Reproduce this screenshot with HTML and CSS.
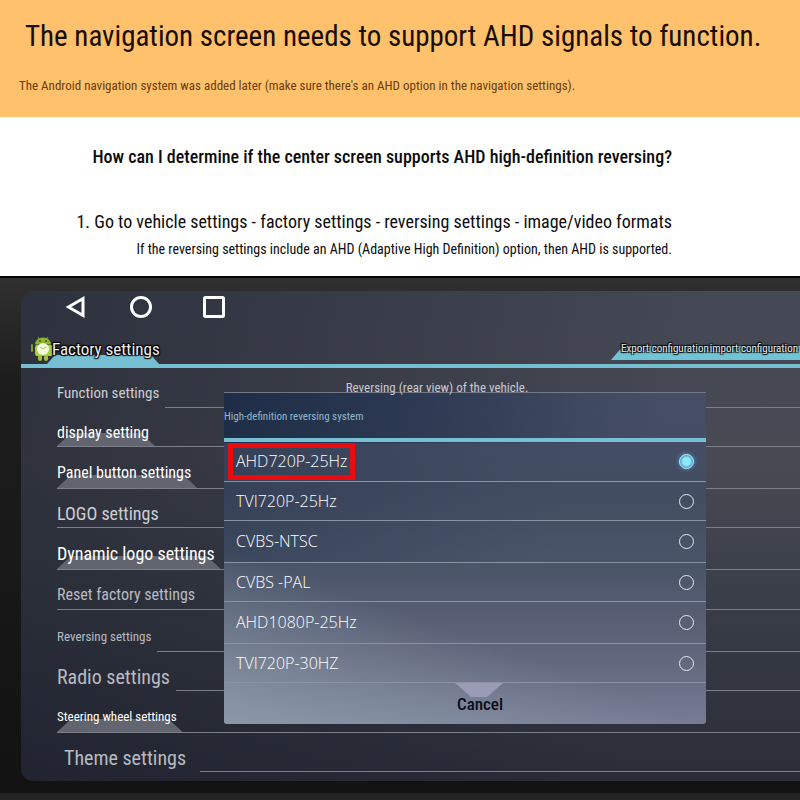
FILE: index.html
```
<!DOCTYPE html>
<html lang="en">
<head>
  <meta charset="UTF-8" />
  <title>AHD reversing settings</title>
  <link rel="stylesheet" href="styles.css">
</head>
<body>
  <header class="banner">
    <h1>The navigation screen needs to support AHD signals to function.</h1>
    <p>The Android navigation system was added later (make sure there's an AHD option in the navigation settings).</p>
  </header>

  <section class="guide">
    <h2>How can I determine if the center screen supports AHD high-definition reversing?</h2>
    <p class="step">1. Go to vehicle settings - factory settings - reversing settings - image/video formats</p>
    <p class="note">If the reversing settings include an AHD (Adaptive High Definition) option, then AHD is supported.</p>
  </section>

  <main class="device">
    <div class="screen">
      <nav class="navbar">
        <button type="button" aria-label="Back">
          <svg width="24" height="24" viewBox="0 0 24 24"><path d="M19 3.500V20.500L4.500 12Z" /></svg>
        </button>
        <button type="button" aria-label="Home">
          <svg width="24" height="24" viewBox="0 0 24 24"><circle cx="12" cy="12" r="9.500" /></svg>
        </button>
        <button type="button" class="recent" aria-label="Recent apps">
          <svg width="24" height="24" viewBox="0 0 24 24"><rect x="2.500" y="2.500" width="19" height="19" rx="1" /></svg>
        </button>
      </nav>

      <div class="titlebar">
        <svg class="robot" width="24" height="26" viewBox="0 0 24 26">
          <path d="M7 1l2 3M17 1l-2 3" stroke="#86a832" fill="none" />
          <path d="M4 8.500a8 7 0 0 1 16 0z" fill="#8eb52e" />
          <rect x="4" y="9" width="18" height="11" rx="2" fill="#a9cf3c" />
          <rect x="0" y="8" width="2" height="8" rx="1" fill="#7f9b34" />
          <rect x="7" y="19" width="4" height="6" rx="2" fill="#9fc23c" />
          <rect x="13" y="19" width="4" height="6" rx="2" fill="#9fc23c" />
          <circle cx="12" cy="13" r="6" fill="#f2fadd" />
          <path d="M9 11l3 2 3-2" stroke="#a5c552" fill="none" />
          <circle cx="9" cy="5" r="1" fill="#46601a" />
          <circle cx="15" cy="5" r="1" fill="#46601a" />
        </svg>
        <h3>Factory settings</h3>
        <div class="actions">
          <button type="button">Export configuration</button>
          <button type="button">import configuration</button>
        </div>
      </div>

      <ul class="menu">
        <li><a class="medium" href="#">Function settings</a></li>
        <li class="tab"><a class="large bright" href="#">display setting</a></li>
        <li class="tab"><a class="large bright" href="#">Panel button settings</a></li>
        <li class="line"><a class="xlarge" href="#">LOGO settings</a></li>
        <li class="tab"><a class="xlarge bright" href="#">Dynamic logo settings</a></li>
        <li class="line"><a class="large dim" href="#">Reset factory settings</a></li>
        <li><a class="small dim" href="#">Reversing settings</a></li>
        <li><a class="huge dim" href="#">Radio settings</a></li>
        <li class="tab"><a class="small bright" href="#">Steering wheel settings</a></li>
        <li><a class="huge dim inset" href="#">Theme settings</a></li>
      </ul>

      <form class="dialog">
        <h4 class="dialog-title">Reversing (rear view) of the vehicle.</h4>
        <p class="dialog-head">High-definition reversing system</p>
        <label class="option"><span class="marked">AHD720P-25Hz</span><input type="radio" name="format" checked></label>
        <label class="option"><span>TVI720P-25Hz</span><input type="radio" name="format"></label>
        <label class="option"><span>CVBS-NTSC</span><input type="radio" name="format"></label>
        <label class="option"><span>CVBS -PAL</span><input type="radio" name="format"></label>
        <label class="option"><span>AHD1080P-25Hz</span><input type="radio" name="format"></label>
        <label class="option"><span>TVI720P-30HZ</span><input type="radio" name="format"></label>
        <button type="button" class="cancel">Cancel</button>
      </form>
    </div>
  </main>
</body>
</html>
```
FILE: styles.css
```
* { box-sizing: border-box; }
body { margin: 0; background: #fff; color: #0c0c0c; font-family: "Roboto Condensed", Roboto, "Liberation Sans", sans-serif; }
h1, h2, h3, h4, p, ul { margin: 0; padding: 0; font-weight: normal; white-space: nowrap; }
button { margin: 0; padding: 0; border: 0; background: none; font-family: inherit; }

.banner { height: 117px; padding: 14px 19px; background: #ffc16b; }
.banner h1 { padding-left: 6px; font-size: 29px; line-height: 44px; color: #170d02; }
.banner p { margin-top: 18px; font-size: 13px; line-height: 20px; color: #6b3c0b; }

.guide { width: 84%; height: 159px; padding-top: 28px; text-align: right; }
.guide h2 { font-size: 18px; font-weight: 500; line-height: 24px; }
.guide .step { margin-top: 40px; font-size: 18px; line-height: 26px; }
.guide .note { margin-top: 4px; font-size: 14px; line-height: 20px; }

.device { padding: 13px 0 12px 21px; border-top: 2px solid #060606; border-bottom: 8px solid #242424; background: linear-gradient(#303030, #1d1d1d 20%, #121212); }
.screen { position: relative; padding-bottom: 9px; border-radius: 12px 0 0 12px; background: linear-gradient(100deg, rgba(22, 26, 38, 0.5), rgba(22, 26, 38, 0.3) 35%, transparent 80%), linear-gradient(#454955, #474953 35%, #3b3f49 60%, #2a2c38); }

.navbar { display: flex; gap: 41px; padding: 4px 0 0 43px; }
.navbar button { width: 24px; height: 24px; }
.navbar .recent { margin-left: 8px; }
.navbar svg { display: block; fill: none; stroke: #fff; stroke-width: 3; }

.titlebar { position: relative; display: flex; align-items: center; height: 49px; padding: 14px 2px 0 10px; border-bottom: 4px solid #76bed2; }
.titlebar::before { content: ""; position: absolute; left: 26px; bottom: 0; width: 112px; height: 9px; background: #76bed2; clip-path: polygon(8px 0, 104px 0, 100% 100%, 0 100%); }
.titlebar h3 { position: relative; margin-left: -3px; font-size: 17px; color: #eee; text-shadow: 1px 1px 1px #000, -1px -1px 1px #000, 1px -1px 1px #000, -1px 1px 1px #000; }
.robot { position: relative; }
.actions { position: relative; display: flex; gap: 1px; margin-left: auto; }
.actions::before { content: ""; position: absolute; right: -2px; left: -10px; bottom: -5px; height: 14px; background: #72c3d6; clip-path: polygon(12px 0, 100% 0, 100% 100%, 0 100%); }
.actions button { position: relative; font-size: 11px; color: #e4e4e4; text-shadow: 1px 1px 1px #000, -1px -1px 1px #000, 1px -1px 1px #000, -1px 1px 1px #000; }

.menu { list-style: none; padding-left: 36px; }
.menu li { display: flex; height: 42px; }
.menu li:first-child { height: 40px; }
.menu li:nth-child(even) { height: 39px; }
.menu li:nth-child(6) { height: 40px; }
.menu li::after { content: ""; flex: 1; border-bottom: 1px solid #7c7f88; }
.menu a { position: relative; display: flex; align-items: center; padding: 10px 6px 0 0; color: #ccced4; text-decoration: none; }
.menu .line a, .menu .tab a { border-bottom: 1px solid #7c7f88; }
.menu .tab a { z-index: 0; }
.menu .tab a::before { content: ""; position: absolute; z-index: -1; left: 0; right: 0; bottom: 0; height: 13px; background: #62656f; clip-path: polygon(14px 0, calc(100% - 14px) 0, 100% 100%, 0 100%); }
.menu .small { font-size: 13px; }
.menu .medium { font-size: 15px; }
.menu .large { font-size: 16px; }
.menu .xlarge { font-size: 18px; }
.menu .huge { font-size: 20px; }
.menu .bright { color: #fff; }
.menu .dim { color: #b9bbc0; }
.menu .inset { padding-left: 7px; padding-right: 14px; }

.dialog { position: absolute; top: 101px; left: 203px; right: 94px; border-radius: 0 0 3px 3px; border-top: 1px solid #74798a; background: linear-gradient(100deg, rgba(20, 36, 62, 0.7), transparent 90%) top / 100% 50px no-repeat, linear-gradient(20deg, rgba(142, 160, 172, 0.8), transparent 35%), linear-gradient(100deg, rgba(20, 36, 62, 0.3), transparent 70%) top / 100% 170px no-repeat, linear-gradient(#454e66, #434d62 30%, #4c566b 55%, #62677d 80%, #777b94); }
.dialog-title { position: absolute; top: -16px; left: 0; right: 56px; text-align: center; font-size: 13px; line-height: 22px; color: #c6c9d2; }
.dialog-head { height: 49px; padding: 14px 0 0 0; border-bottom: 4px solid #76bfd5; font-size: 11px; line-height: 20px; color: #8fb9ce; }
.option { display: flex; align-items: center; justify-content: space-between; height: 42px; padding: 0 12px 0 4px; border-bottom: 1px solid #8a92a3; color: #fff; font: 300 16px "Open Sans", "Noto Sans", sans-serif; }
.option:nth-of-type(even) { height: 39px; }
.option:first-of-type { height: 40px; }
.option span { padding: 0 3px; border: 5px solid transparent; line-height: 27px; }
.option .marked { border-color: #eb0a0e; }
.option input { appearance: none; width: 15px; height: 15px; margin: 0; border: 1px solid #e6eaf2; border-radius: 50%; }
.option input:checked { background: radial-gradient(#8eeaff 40%, #3d9fc4 70%); box-shadow: 0 0 4px #3aa5d8; }
.cancel { position: relative; display: block; width: 100%; height: 41px; padding-left: 30px; font-size: 17px; font-weight: 500; color: #0b0d18; }
.cancel::before { content: ""; position: absolute; left: 50%; top: 0; width: 48px; height: 14px; margin-left: -10px; background: #9a9bb5; clip-path: polygon(0 0, 100% 0, 32px 100%, 16px 100%); }
```
